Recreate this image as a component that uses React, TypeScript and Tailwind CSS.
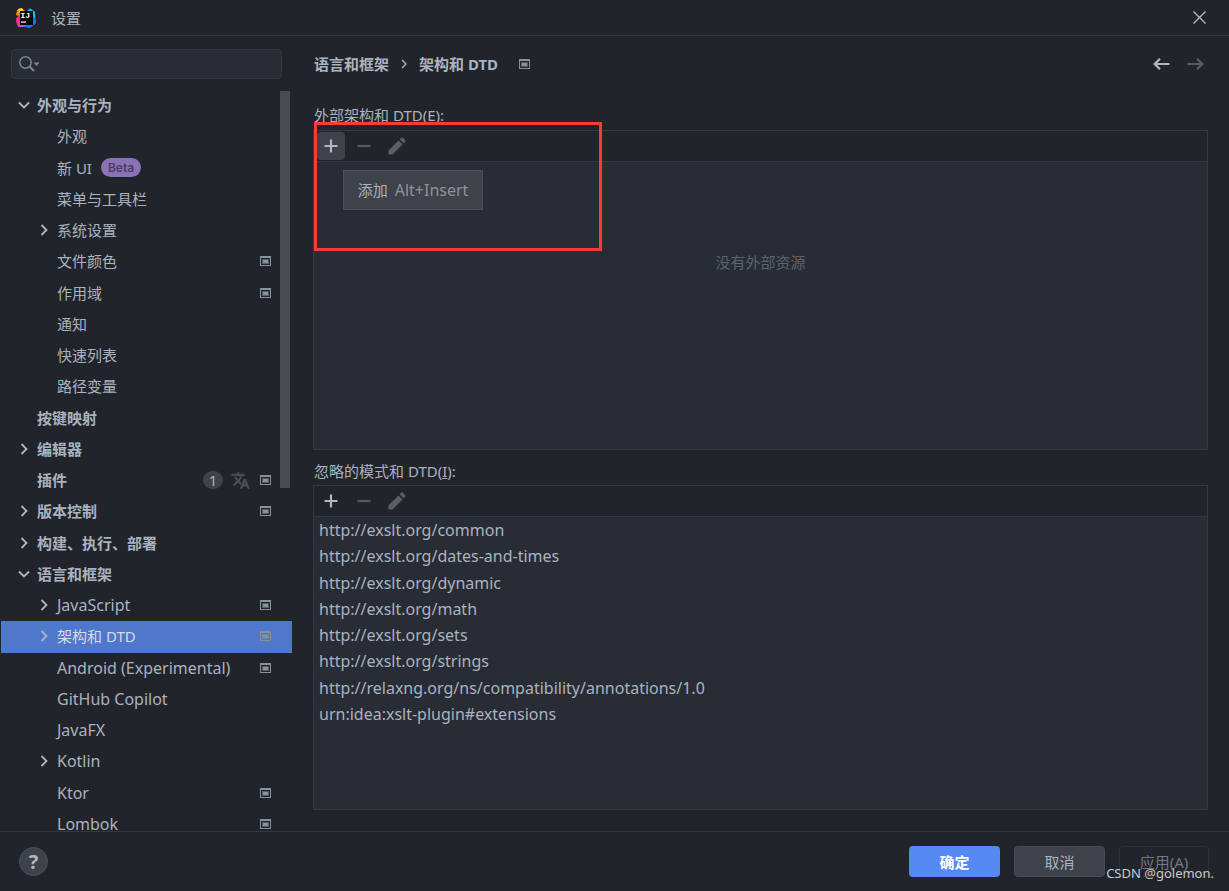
import { ReactNode, useState } from 'react';

interface TreeItem {
  label: string;
  level: 0 | 1;
  arrow?: 'open' | 'closed';
  project?: boolean;
  beta?: boolean;
  latin?: boolean;
  updates?: number;
}

const treeItems: TreeItem[] = [
  { label: '外观与行为', level: 0, arrow: 'open' },
  { label: '外观', level: 1 },
  { label: '新 UI', level: 1, beta: true },
  { label: '菜单与工具栏', level: 1 },
  { label: '系统设置', level: 1, arrow: 'closed' },
  { label: '文件颜色', level: 1, project: true },
  { label: '作用域', level: 1, project: true },
  { label: '通知', level: 1 },
  { label: '快速列表', level: 1 },
  { label: '路径变量', level: 1 },
  { label: '按键映射', level: 0 },
  { label: '编辑器', level: 0, arrow: 'closed' },
  { label: '插件', level: 0, project: true, updates: 1 },
  { label: '版本控制', level: 0, arrow: 'closed', project: true },
  { label: '构建、执行、部署', level: 0, arrow: 'closed' },
  { label: '语言和框架', level: 0, arrow: 'open' },
  { label: 'JavaScript', level: 1, arrow: 'closed', project: true, latin: true },
  { label: '架构和 DTD', level: 1, arrow: 'closed', project: true },
  { label: 'Android (Experimental)', level: 1, project: true, latin: true },
  { label: 'GitHub Copilot', level: 1, latin: true },
  { label: 'JavaFX', level: 1, latin: true },
  { label: 'Kotlin', level: 1, arrow: 'closed', latin: true },
  { label: 'Ktor', level: 1, project: true, latin: true },
  { label: 'Lombok', level: 1, project: true, latin: true },
];

const ignored = [
  'http://exslt.org/common',
  'http://exslt.org/dates-and-times',
  'http://exslt.org/dynamic',
  'http://exslt.org/math',
  'http://exslt.org/sets',
  'http://exslt.org/strings',
  'http://relaxng.org/ns/compatibility/annotations/1.0',
  'urn:idea:xslt-plugin#extensions',
];

function Logo() {
  return (
    <svg width="20" height="20" viewBox="0 0 20 20">
      <path d="M1 3 L5 0 L9 3 L8 17 L3 19 L1 16 L0 13 L2 9 Z" fill="#f9316c" />
      <path d="M1 2 L5 0 L9 3 L4 8 L0 7 Z" fill="#fc801d" />
      <path d="M2 1 L6 0 L8 3 L4 5 Z" fill="#fdd32f" />
      <path d="M0 10 L4 8 L5 17 L2 19 Z" fill="#fe2d8b" />
      <path d="M11 3 L14 0.5 L19 4 L20 15 L14 20 L8 19 L7 16 L16 15 Z" fill="#087cfa" />
      <path d="M11 3 L14 0.5 L19 4 L19 10 L16 8 Z" fill="#07c3f2" />
      <path d="M2 19 L5 15 L10 17 L8 19 Z" fill="#c34af0" />
      <rect x="4" y="3" width="13" height="14" fill="#0a0508" />
      <text x="4.5" y="9.500" fontSize="8" fontWeight="700" fontFamily="Liberation Mono, monospace" fill="#fff">IJ</text>
      <rect x="5" y="13.500" width="5" height="1.200" fill="#fff" />
    </svg>
  );
}

function ProjectIcon() {
  return (
    <svg width="11" height="10" viewBox="0 0 11 10" className="shrink-0">
      <path d="M0 0H11V10H0Z M1 2V9H10V2Z" fill="#87919b" fillRule="evenodd" />
      <rect x="2" y="3" width="7" height="5" fill="#87919b" fillOpacity="0.5" />
      <rect x="3" y="4" width="5" height="3" fill="#87919b" />
    </svg>
  );
}

function Chevron({ open }: { open?: boolean }) {
  return (
    <svg width="12" height="12" viewBox="0 0 12 12" fill="none" stroke="currentColor" strokeWidth="1.8">
      <path d={open ? 'M1 3.5L6 8.5L11 3.5' : 'M3.5 1L8.5 6L3.5 11'} />
    </svg>
  );
}

function TranslateIcon() {
  return (
    <svg width="19" height="19" viewBox="0 0 24 24" fill="#4b515a" stroke="#4b515a" strokeWidth="0.8">
      <path d="M12.87 15.07l-2.54-2.51.03-.03A17.52 17.52 0 0 0 14.07 6H17V4h-7V2H8v2H1v2h11.17C11.5 7.92 10.44 9.75 9 11.35 8.07 10.32 7.3 9.19 6.69 8h-2c.73 1.63 1.73 3.17 2.98 4.56l-5.09 5.02L4 19l5-5 3.11 3.11.76-2.04zM18.5 10h-2L12 22h2l1.12-3h4.75L21 22h2l-4.5-12zm-2.62 7l1.62-4.33L19.12 17h-3.24z" />
    </svg>
  );
}

function PanelToolbar({ active }: { active?: boolean }) {
  return (
    <div className="flex h-[31px] shrink-0 items-center gap-[5px] border-b border-[#333841] bg-[#21252b] pl-[3px]">
      <button type="button" aria-label="添加" className={`flex size-7 items-center justify-center rounded ${active ? 'bg-[#3d424b]' : ''}`}>
        <svg width="14" height="14" viewBox="0 0 14 14" fill="#b4b6b9">
          <path d="M5.9 0.5H8.1V5.900H13.5V8.100H8.1V13.5H5.9V8.100H0.5V5.900H5.9Z" />
        </svg>
      </button>
      <button type="button" aria-label="删除" disabled className="flex size-7 items-center justify-center">
        <svg width="14" height="14" viewBox="0 0 14 14" fill="#585a5c">
          <rect x="0.5" y="5.900" width="13" height="2.200" />
        </svg>
      </button>
      <button type="button" aria-label="编辑" disabled className="flex size-7 items-center justify-center">
        <svg width="18" height="18" viewBox="0 0 18 18" fill="#5c5e60">
          <path d="M0.5 17.5V13.5L10.5 3.5L14.5 7.5L4.5 17.5Z" />
          <path d="M11.7 2.3L13.4 0.6Q14 0 14.6 0.6L17.4 3.4Q18 4 17.4 4.6L15.7 6.3Z" />
        </svg>
      </button>
    </div>
  );
}

function Panel({ children, active }: { children: ReactNode; active?: boolean }) {
  return (
    <section className="flex min-h-0 flex-1 flex-col border border-[#333841] bg-[#282c34]">
      <PanelToolbar active={active} />
      {children}
    </section>
  );
}

export default function App() {
  const [search, setSearch] = useState('');
  const [selected, setSelected] = useState('架构和 DTD');

  return (
    <div className="relative flex h-screen flex-col overflow-hidden bg-[#21252b] font-['Noto_Sans','Noto_Sans_CJK_SC',sans-serif] text-[15px] leading-5 text-[#abb2bf]">
      <header className="flex h-9 shrink-0 items-center border-b border-[#333841] pl-4 pr-[23px]">
        <Logo />
        <h1 className="ml-[15px]">设置</h1>
        <button type="button" aria-label="关闭" className="ml-auto">
          <svg width="13" height="13" viewBox="0 0 13 13" stroke="#b9bbbe" strokeWidth="1.3">
            <path d="M0.5 0.5L12.5 12.5M12.5 0.5L0.5 12.5" />
          </svg>
        </button>
      </header>

      <div className="flex min-h-0 flex-1">
        <aside className="flex w-[293px] shrink-0 flex-col overflow-hidden pt-[13px]">
          <label className="ml-[11px] mr-[11px] flex h-[30px] shrink-0 items-center rounded border border-[#333841] bg-[#282c34] pl-[7px]">
            <svg width="21" height="16" viewBox="0 0 21 16" fill="none" stroke="#7f868f" strokeWidth="1.5">
              <circle cx="6.5" cy="6.5" r="5.7" />
              <path d="M10.5 10.5L15 15" strokeWidth="2" />
              <path d="M14.5 6.5H20.5L17.5 10Z" fill="#7f868f" stroke="none" />
            </svg>
            <input
              type="text"
              aria-label="搜索设置"
              className="min-w-0 flex-1 bg-transparent pl-1 outline-none"
              value={search}
              onChange={e => setSearch(e.target.value)}
            />
          </label>

          <div className="relative mt-[11px] min-h-0 flex-1 overflow-hidden px-px">
            <ul className="grid h-[750px] grid-rows-[repeat(24,minmax(0,1fr))]">
              {treeItems.map(item => {
                const isSelected = item.label === selected;
                return (
                  <li key={item.label} className="min-h-0">
                    <button
                      type="button"
                      onClick={() => setSelected(item.label)}
                      className={`flex h-full w-full items-center pb-px pr-[21px] text-left ${item.level === 0 ? 'pl-[17px] font-bold' : 'pl-[37px]'} ${isSelected ? 'bg-[#4d78cc] text-[#d7dae0]' : ''}`}
                    >
                      <span className={`flex w-[19px] shrink-0 ${isSelected ? 'text-[#a9b4c8]' : 'text-[#b4b6b9]'}`}>
                        {item.arrow && <Chevron open={item.arrow === 'open'} />}
                      </span>
                      <span className={`whitespace-nowrap ${item.latin ? 'text-base leading-5' : ''}`}>{item.label}</span>
                      {item.beta && (
                        <span className="ml-[9px] h-[19px] rounded-full bg-[#8b72b8] px-[7px] font-['Inter',sans-serif] text-[12px] font-semibold leading-[19px] text-[#473e62]">Beta</span>
                      )}
                      <span className="ml-auto flex items-center">
                        {item.updates && (
                          <>
                            <span className="mr-2 flex h-[18px] w-5 items-center justify-center rounded-full bg-[#3d424b] font-normal">{item.updates}</span>
                            <TranslateIcon />
                            <span className="w-[10px]" />
                          </>
                        )}
                        {item.project && <ProjectIcon />}
                      </span>
                    </button>
                  </li>
                );
              })}
            </ul>
            <div className="absolute right-[3px] top-px h-[397px] w-[10px] bg-[#494c50]" />
          </div>
        </aside>

        <main className="flex min-w-0 flex-1 flex-col pb-[21px] pl-5 pr-[21px]">
          <div className="flex h-14 shrink-0 items-center pl-px font-bold">
            <nav className="flex items-center">
              <a href="#languages">语言和框架</a>
              <svg width="6" height="10" viewBox="0 0 6 10" fill="none" stroke="#abb2bf" strokeWidth="1.4" className="mx-3">
                <path d="M1 1L5 5L1 9" />
              </svg>
              <span>架构和 DTD</span>
            </nav>
            <span className="ml-[21px]"><ProjectIcon /></span>
            <div className="ml-auto flex items-center gap-[17px] pr-1">
              <button type="button" aria-label="后退">
                <svg width="17" height="12" viewBox="0 0 17 12" fill="none" stroke="#b4b6b9" strokeWidth="2.2">
                  <path d="M16.5 6H1.5M7 0.8L1.7 6L7 11.2" />
                </svg>
              </button>
              <button type="button" aria-label="前进" disabled>
                <svg width="17" height="12" viewBox="0 0 17 12" fill="none" stroke="#5c5e60" strokeWidth="2.2">
                  <path d="M0.5 6H15.5M10 0.8L15.3 6L10 11.2" />
                </svg>
              </button>
            </div>
          </div>

          <h2 className="mb-[5px] mt-[13px] pl-px">外部架构和 DTD(E):</h2>
          <div className="relative flex min-h-0 flex-[64] flex-col">
            <Panel active>
              <p className="mt-[90px] text-center text-[#5c6370]">没有外部资源</p>
            </Panel>
            <div role="tooltip" className="absolute left-[30px] top-10 flex h-10 w-[140px] items-center justify-center gap-[7px] whitespace-nowrap border border-[#4b5059] bg-[#3d424b] pb-px">
              <span>添加</span>
              <span className="text-base leading-5 text-[#8f9296]">Alt+Insert</span>
            </div>
            <div className="pointer-events-none absolute -top-2 left-px h-[129px] w-[288px] border-[3px] border-[#ff3a35]" />
          </div>

          <h2 className="mb-1 mt-[11px] pl-px">忽略的模式和 DTD(<u>I</u>):</h2>
          <div className="flex min-h-0 flex-[65] flex-col">
            <Panel>
              <ul className="grid h-[210px] shrink-0 grid-rows-8 pl-[5px] text-base leading-5">
                {ignored.map(url => (
                  <li key={url} className="flex items-center">{url}</li>
                ))}
              </ul>
            </Panel>
          </div>
        </main>
      </div>

      <footer className="flex h-[60px] shrink-0 items-center border-t border-[#333841] pl-[19px] pr-5">
        <button type="button" aria-label="帮助" className="size-[29px] rounded-full border border-[#4b5059] bg-[#3d424b] text-xl font-bold leading-[27px] text-[#b4b6b9]">?</button>
        <div className="ml-auto flex gap-[14px]">
          <button type="button" className="h-[31px] w-[91px] rounded bg-[#568af2] font-bold text-white">确定</button>
          <button type="button" className="h-[31px] w-[91px] rounded border border-[#464c55] bg-[#3d424b]">取消</button>
          <button type="button" disabled className="h-[31px] w-[90px] rounded border border-[#2d3138] text-[#74787e]">应用(A)</button>
        </div>
      </footer>
      <span className="absolute bottom-2 right-[15px] text-[13px] text-[#c9cbce]">CSDN @golemon.</span>
    </div>
  );
}
